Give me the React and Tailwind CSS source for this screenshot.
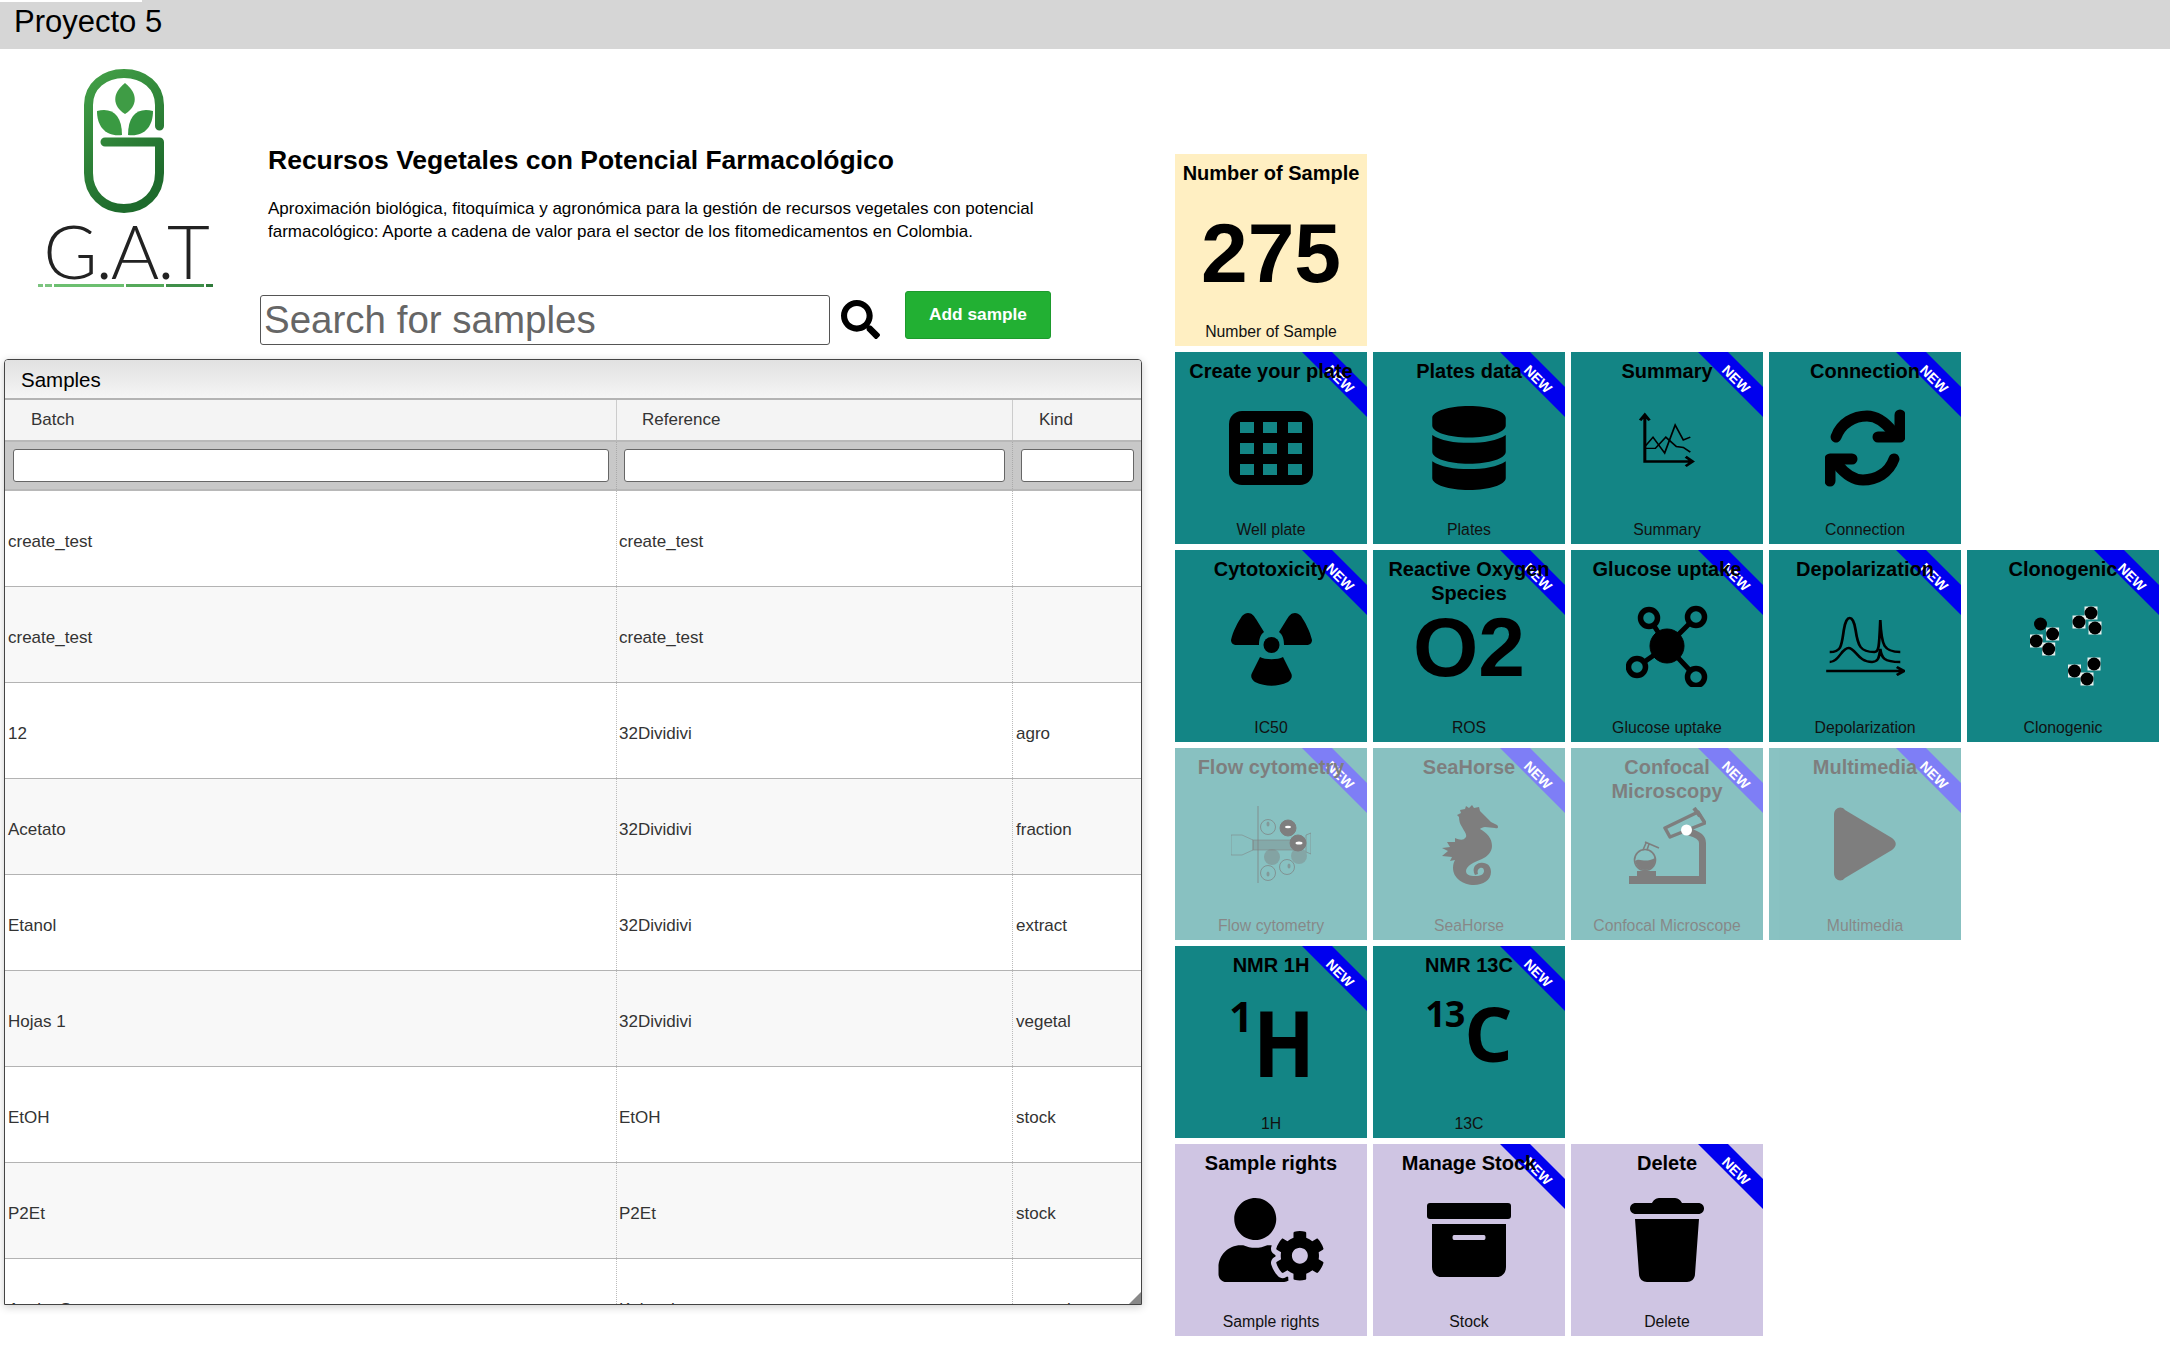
import React from "react";
import { FaDatabase, FaSearch, FaUserCog } from "react-icons/fa";

const font = "font-['Liberation_Sans',Arial,sans-serif]";

const Ribbon = () => (
  <div className="absolute top-0 right-0 w-[65px] h-[65px] overflow-hidden">
    <svg width="65" height="65" viewBox="0 0 65 65">
      <polygon points="0,0 30,0 65,35 65,65" fill="#0000ee" />
    </svg>
    <span className="absolute left-[19px] top-[18px] w-[38px] text-center text-white text-[14px] leading-[18px] font-bold rotate-45">
      NEW
    </span>
  </div>
);

const Card = ({ title, label, bg, ribbon = true, faded, children }) => (
  <div
    className={`relative w-[192px] h-[192px] shrink-0 flex flex-col text-center ${bg} ${
      faded ? "opacity-50" : ""
    }`}
  >
    {ribbon && <Ribbon />}
    <div className="relative h-[46px] shrink-0 pt-[7px] text-[20px] leading-[24px] font-bold text-black">
      {title}
    </div>
    <div className="flex-1 flex items-center justify-center min-h-0">
      {children}
    </div>
    <div className="h-[46px] shrink-0 pt-[20px] text-[15.8px] leading-[24px] text-[#111]">
      {label}
    </div>
  </div>
);

const PlateIcon = () => (
  <svg width="84" height="74" viewBox="0 0 84 74">
    <rect width="84" height="74" rx="13" fill="#000" />
    {[11, 32, 53].map((y) =>
      [11, 34, 59].map((x) => (
        <rect key={`${x}-${y}`} x={x} y={y} width="14" height="11" fill="#138585" />
      ))
    )}
  </svg>
);

const SummaryIcon = () => (
  <svg className="-translate-y-[8px]" width="56" height="56" viewBox="0 0 48 60" preserveAspectRatio="none" fill="none" stroke="#000">
    <path d="M5 3 V53 H44 M1 9 L5 3 L9 9 M40 48 L46 53 L40 58" strokeWidth="2.6" />
    <path d="M5 37 L12 27 L22 44 L31 14 L38 30 L44 27" strokeWidth="1.5" />
    <path d="M5 39 H14 L23 27 L32 37 L38 38 L44 43" strokeWidth="1.5" />
  </svg>
);

const SyncIcon = () => (
  <svg width="80" height="78" viewBox="0 0 80 78" fill="none" stroke="#000" strokeWidth="11" strokeLinecap="round" strokeLinejoin="round">
    <path d="M11 28 C16 14 29 7 42 7 C52 7 60 13 68 23" />
    <path d="M75 6 V28 H53" />
    <path d="M69 50 C64 64 51 71 38 71 C28 71 20 65 12 55" />
    <path d="M5 72 V50 H27" />
  </svg>
);

const RadiationIcon = () => (
  <svg className="translate-y-[3px]" width="81" height="73" viewBox="0 0 81 73" fill="#000">
    <path d="M17 0 C21 0 23 3 25 6 L33 19 C29 22 28 27 28 32 L6 32 C2 32 0 30 0 27 C2 18 7 9 11 3 C13 1 15 0 17 0 Z" />
    <path d="M64 0 C60 0 58 3 56 6 L48 19 C52 22 53 27 53 32 L75 32 C79 32 81 30 81 27 C79 18 74 9 70 3 C68 1 66 0 64 0 Z" />
    <path d="M29 44 C34 47 47 47 52 44 L60 60 C62 64 60 67 57 69 C46 74 35 74 24 69 C21 67 19 64 21 60 Z" />
    <circle cx="40.5" cy="32" r="8" />
  </svg>
);

const O2Icon = () => (
  <span className="text-[84px] leading-none font-bold text-black translate-y-[1px]">O2</span>
);

const GlucoseIcon = () => (
  <svg width="82" height="82" viewBox="0 0 82 82" fill="none" stroke="#000">
    <path d="M41 41 L23 13 M41 41 L70 12 M41 41 L11 62 M41 41 L70 72" strokeWidth="5" />
    <circle cx="41" cy="41" r="17" fill="#000" />
    <circle cx="23" cy="13" r="8.5" fill="#138585" strokeWidth="5.5" />
    <circle cx="70" cy="12" r="8.5" fill="#138585" strokeWidth="5.5" />
    <circle cx="11" cy="62" r="8.5" fill="#138585" strokeWidth="5.5" />
    <circle cx="70" cy="72" r="8.5" fill="#138585" strokeWidth="5.5" />
  </svg>
);

const DepolIcon = () => (
  <svg width="80" height="60" viewBox="0 0 68 60" preserveAspectRatio="none" fill="none" stroke="#000" strokeWidth="2.3">
    <path d="M4 36 C14 36 14 30 16 14 C18 -2 24 -2 26 14 C28 30 30 36 42 36 C46 36 46 30 47 4 C48 30 50 36 64 36" />
    <path d="M4 46 C12 46 14 32 20 32 C26 32 28 46 40 46 C45 46 46 42 47 33 C48 42 50 46 64 46" />
    <path d="M1 55 H66 M61 51 L67 55 L61 59" strokeWidth="2.6" />
  </svg>
);

const clonoDots = [
  [10.5, 18, false], [22.6, 28, true], [6.2, 35, true], [18.7, 43, true],
  [61, 7, true], [49, 16, true], [65, 22, true],
  [64, 58, true], [44.5, 65, true], [57, 73, true],
];

const ClonogenicIcon = () => (
  <svg className="translate-x-[3px]" width="72" height="80" viewBox="0 0 72 80">
    {clonoDots.map(([x, y, box]) => (
      <g key={`${x}-${y}`}>
        {box && <rect x={x - 6.5} y={y - 6.5} width="13" height="13" fill="#e8f0ee" />}
        <circle cx={x} cy={y} r="6.5" fill="#000" />
      </g>
    ))}
  </svg>
);

const FlowIcon = () => (
  <svg width="80" height="77" viewBox="0 0 80 77" fill="none" stroke="#000">
    <path d="M27 0 V77" strokeWidth="1.5" strokeOpacity="0.5" />
    <path d="M0 29 H11 L22 34 V44 L11 49 H0 Z" strokeWidth="1" strokeOpacity="0.5" />
    <rect x="22" y="34" width="46" height="10" fill="#000" fillOpacity="0.35" strokeWidth="1" strokeOpacity="0.5" />
    <path d="M75 29 L80 27 L80 48 L75 46 Z" strokeWidth="1" strokeOpacity="0.6" />
    <circle cx="37" cy="21" r="7.5" strokeWidth="0.7" />
    <ellipse cx="37" cy="18" rx="1.5" ry="2.5" fill="#000" fillOpacity="0.6" stroke="none" />
    <circle cx="41" cy="51" r="8" fill="#000" fillOpacity="0.45" stroke="none" />
    <circle cx="68" cy="50" r="8" fill="#000" fillOpacity="0.4" stroke="none" />
    <circle cx="57" cy="22" r="8" fill="#000" />
    <ellipse cx="57" cy="21" rx="3" ry="1.3" fill="#fff" stroke="none" />
    <circle cx="67" cy="37" r="8" fill="#000" />
    <ellipse cx="68" cy="37" rx="3.5" ry="1.6" fill="#fff" stroke="none" />
    <circle cx="37" cy="67" r="7.5" strokeWidth="0.7" />
    <ellipse cx="37" cy="68" rx="1.5" ry="2.5" fill="#000" fillOpacity="0.6" stroke="none" />
    <circle cx="56" cy="61" r="7.5" strokeWidth="0.7" />
    <ellipse cx="58" cy="60" rx="1.5" ry="2.5" fill="#000" fillOpacity="0.6" stroke="none" />
  </svg>
);

const SeahorseIcon = () => (
  <svg width="57" height="81" viewBox="0 0 57 81">
    <path
      fill="#000"
      d="M31 1 L33 4 L38 3 L39 7 L44 12 L50 18 L56 21 C58 23 57 25 54 24 L44 23 C42 23 40 24 39 25 C46 29 51 34 51 42 C51 48 46 53 41 55 C33 58 25 62 25 67 C25 71 29 72 34 72 C40 72 43 70 43 67 C43 64 41 63 39 64 C37 65 36 67 37 70 L34 71 C31 66 33 60 39 59 C46 58 50 62 50 68 C50 76 42 81 33 81 C22 81 12 74 12 64 C12 60 13 58 14 56 L9 57 L11 53 L1 52 L7 47 L1 44 L9 43 L6 38 L14 38 L14 34 C19 36 22 37 25 33 C26 30 23 27 21 23 C19 20 18 17 18 13 L16 11 L20 9 L19 6 L24 5 L25 2 L28 4 Z"
    />
  </svg>
);

const MicroscopeIcon = () => (
  <svg className="translate-y-[1px]" width="77" height="77" viewBox="0 0 77 77" fill="none" stroke="#000">
    <rect x="0" y="69" width="77" height="8" fill="#000" stroke="none" />
    <path d="M73.5 70 V36 C73.5 31 68 27 60 25" strokeWidth="7" />
    <path d="M36 21 L69 5 L76 16 L41 30 Z" strokeWidth="3.5" strokeLinejoin="round" />
    <path d="M65 1 L71 9" strokeWidth="4" />
    <circle cx="57.5" cy="23" r="5.5" fill="#fff" stroke="none" />
    <rect x="8" y="64" width="19" height="5" fill="#000" stroke="none" />
    <circle cx="16" cy="53" r="10.5" strokeWidth="1.6" />
    <path d="M6 54 C11 50 15 57 26 51 C27 59 21 63 16 63 C11 63 7 59 6 54 Z" fill="#000" stroke="none" />
    <path d="M14 43 L17 36 M16 35 L30 41 M20 37 L18 43" strokeWidth="1.6" />
  </svg>
);

const PlayIcon = () => (
  <svg width="62" height="74" viewBox="0 0 62 74">
    <path
      fill="#000"
      d="M0 8 C0 1 7 -2 11 3 L58 31 C63 35 63 39 58 43 L11 71 C7 76 0 73 0 66 Z"
    />
  </svg>
);

const BoxIcon = () => (
  <svg width="84" height="74" viewBox="0 0 84 74">
    <rect width="84" height="16" y="0" rx="3" fill="#000" />
    <path
      fill="#000"
      fillRule="evenodd"
      d="M5 21 H79 V64 C79 70 75 74 70 74 H14 C9 74 5 70 5 64 Z M27 32 C25 32 25 37 27 37 H57 C59 37 59 32 57 32 Z"
    />
  </svg>
);

const TrashIcon = () => (
  <svg width="74" height="84" viewBox="0 0 74 84">
    <path
      fill="#000"
      d="M22 5 C24 1 27 0 30 0 H44 C47 0 50 1 52 5 H68 C76 5 76 16 68 16 H6 C-2 16 -2 5 6 5 Z"
    />
    <path fill="#000" d="M5 21 H69 L65 76 C65 81 61 84 57 84 H17 C13 84 9 81 9 76 Z" />
  </svg>
);

const Logo = () => (
  <div className="w-[176px] flex flex-col items-center">
    <svg className="mr-[6px]" width="80" height="144" viewBox="0 0 80 144">
      <defs>
        <linearGradient id="pill" x1="0" y1="0" x2="0.4" y2="1">
          <stop offset="0" stopColor="#43a047" />
          <stop offset="1" stopColor="#1e6b2c" />
        </linearGradient>
      </defs>
      <path
        d="M75.5 57 V36 C75.5 17 60 4.5 40 4.5 C20 4.5 4.5 17 4.5 36 V104 C4.5 125 20 139.5 40 139.5 C60 139.5 75.5 125 75.5 104 V73 H21"
        fill="none"
        stroke="url(#pill)"
        strokeWidth="9"
        strokeLinecap="round"
        strokeLinejoin="round"
      />
      <path d="M41 14 C54 24 54 37 41 45 C28 37 28 24 41 14 Z" fill="#3f9c45" />
      <path d="M13 42 C28 38 38 46 38 66 C22 68 13 58 13 42 Z" fill="#3a9a42" />
      <path d="M69 42 C54 38 44 46 44 66 C60 68 69 58 69 42 Z" fill="#349440" />
    </svg>
    <div className="font-['Lato',sans-serif] font-light text-[74px] leading-[64px] text-[#222] mt-[6px] tracking-[-2px] mr-[3px]">
      G.A.T
    </div>
    <div className="flex gap-[2px] mt-[1px] mr-[3px]">
      <span className="w-[5px] h-[3px] bg-[#7cc47f]" />
      <span className="w-[7px] h-[3px] bg-[#7cc47f]" />
      <span className="w-[70px] h-[3px] bg-[#6cbf70]" />
      <span className="w-[38px] h-[3px] bg-[#55a95a]" />
      <span className="w-[38px] h-[3px] bg-[#3f8f49]" />
      <span className="w-[7px] h-[3px] bg-[#2f7a3a]" />
    </div>
  </div>
);

const rows = [
  ["create_test", "create_test", ""],
  ["create_test", "create_test", ""],
  ["12", "32Dividivi", "agro"],
  ["Acetato", "32Dividivi", "fraction"],
  ["Etanol", "32Dividivi", "extract"],
  ["Hojas 1", "32Dividivi", "vegetal"],
  ["EtOH", "EtOH", "stock"],
  ["P2Et", "P2Et", "stock"],
  ["Aceite S", "Kalanchoe", "vegetal"],
];

const SamplesTable = () => (
  <div className="relative mt-[14px] ml-[4px] w-[1138px] h-[946px] border border-[#444] rounded-t-[4px] shadow-[0_2px_8px_rgba(0,0,0,0.2)] overflow-hidden text-[#333] text-[17px]">
    <div className="h-[40px] border-b-2 border-[#b3b3b3] bg-gradient-to-b from-[#e1e1e1] to-[#f5f5f5] pl-[16px] pt-[8px] text-[20.5px] leading-[24px] text-black">
      Samples
    </div>
    <div className="flex h-[40px] bg-[#f4f4f4] leading-[40px]">
      <div className="w-[612px] pl-[26px] border-r border-[#ccc]">Batch</div>
      <div className="w-[396px] pl-[25px] border-r border-[#ccc]">Reference</div>
      <div className="flex-1 pl-[26px]">Kind</div>
    </div>
    <div className="flex h-[51px] bg-[#c8c8c8] border-y-2 border-[#b8b8b8] items-center">
      <div className="w-[612px] pl-[8px] pr-[7px] h-full flex items-center border-r border-dotted border-[#aaa]">
        <input className="w-full h-[33px] bg-white border border-[#666] rounded-[3px]" />
      </div>
      <div className="w-[396px] pl-[7px] pr-[7px] h-full flex items-center border-r border-dotted border-[#aaa]">
        <input className="w-full h-[33px] bg-white border border-[#666] rounded-[3px]" />
      </div>
      <div className="flex-1 pl-[8px] pr-[7px] h-full flex items-center">
        <input className="w-full h-[33px] bg-white border border-[#666] rounded-[3px]" />
      </div>
    </div>
    {rows.map((r, i) => (
      <div
        key={i}
        className={`flex h-[96px] border-b border-[#b3b3b3] ${
          i % 2 === 1 ? "bg-[#f8f8f8]" : "bg-white"
        }`}
      >
        <div className="w-[612px] pl-[3px] pt-[6px] flex items-center border-r border-dotted border-[#bbb]">{r[0]}</div>
        <div className="w-[396px] pl-[2px] pt-[6px] flex items-center border-r border-dotted border-[#bbb]">{r[1]}</div>
        <div className="flex-1 pl-[3px] pt-[6px] flex items-center">{r[2]}</div>
      </div>
    ))}
    <svg className="absolute right-0 bottom-0" width="12" height="12" viewBox="0 0 12 12">
      <polygon points="12,0 12,12 0,12" fill="#888" />
    </svg>
  </div>
);

const teal = "bg-[#138585]";
const lilac = "bg-[#cfc5e3]";

export default function App() {
  return (
    <div className={`w-[2170px] h-[1350px] bg-white overflow-hidden ${font}`}>
      <div className="h-[49px] bg-[#d6d6d6] text-[31px] leading-[40px] text-black">
        <div className="w-[142px] h-[2px] bg-white" />
        <div className="pl-[14px]">Proyecto 5</div>
      </div>
      <div className="flex">
        <div className="w-[1175px] shrink-0">
          <div className="flex h-[200px]">
            <div className="w-[268px] shrink-0 pl-[39px] pt-[20px]">
              <Logo />
            </div>
            <div className="pt-[93px]">
              <h1 className="text-[26.5px] leading-[36px] font-bold text-black">
                Recursos Vegetales con Potencial Farmacológico
              </h1>
              <p className="mt-[19px] w-[820px] text-[17px] leading-[23px] text-black">
                Aproximación biológica, fitoquímica y agronómica para la gestión de recursos vegetales con potencial
                <br />
                farmacológico: Aporte a cadena de valor para el sector de los fitomedicamentos en Colombia.
              </p>
            </div>
          </div>
          <div className="flex items-start pl-[260px] mt-[42px]">
            <input
              placeholder="Search for samples"
              className="w-[570px] h-[50px] mt-[4px] border border-[#555] rounded-[3px] pl-[3px] text-[38.5px] placeholder:text-[#666]"
            />
            <FaSearch className="ml-[11px] mt-[9px] text-black" size={39} />
            <button className="ml-[25px] w-[146px] h-[48px] bg-[#22b033] border border-[#1d9a2d] rounded-[3px] text-white text-[17.3px] font-bold">
              Add sample
            </button>
          </div>
          <SamplesTable />
        </div>
        <div className="pt-[105px] flex flex-col gap-[6px]">
          <div className="flex gap-[6px]">
            <Card title="Number of Sample" label="Number of Sample" bg="bg-[#ffefc2]" ribbon={false}>
              <span className="text-[84px] leading-none font-bold text-black translate-y-[3px]">275</span>
            </Card>
          </div>
          <div className="flex gap-[6px]">
            <Card title="Create your plate" label="Well plate" bg={teal}><PlateIcon /></Card>
            <Card title="Plates data" label="Plates" bg={teal}><FaDatabase className="w-[74px] h-[84px] text-black" /></Card>
            <Card title="Summary" label="Summary" bg={teal}><SummaryIcon /></Card>
            <Card title="Connection" label="Connection" bg={teal}><SyncIcon /></Card>
          </div>
          <div className="flex gap-[6px]">
            <Card title="Cytotoxicity" label="IC50" bg={teal}><RadiationIcon /></Card>
            <Card title={<>Reactive Oxygen<br />Species</>} label="ROS" bg={teal}><O2Icon /></Card>
            <Card title="Glucose uptake" label="Glucose uptake" bg={teal}><GlucoseIcon /></Card>
            <Card title="Depolarization" label="Depolarization" bg={teal}><DepolIcon /></Card>
            <Card title="Clonogenic" label="Clonogenic" bg={teal}><ClonogenicIcon /></Card>
          </div>
          <div className="flex gap-[6px]">
            <Card title="Flow cytometry" label="Flow cytometry" bg={teal} faded><FlowIcon /></Card>
            <Card title="SeaHorse" label="SeaHorse" bg={teal} faded><SeahorseIcon /></Card>
            <Card title={<>Confocal<br />Microscopy</>} label="Confocal Microscope" bg={teal} faded><MicroscopeIcon /></Card>
            <Card title="Multimedia" label="Multimedia" bg={teal} faded><PlayIcon /></Card>
          </div>
          <div className="flex gap-[6px]">
            <Card title="NMR 1H" label="1H" bg={teal}>
              <div className="flex items-start font-['Open_Sans',sans-serif] font-bold text-black translate-x-[-2px] translate-y-[1px]">
                <span className="text-[42px] leading-[46px]">1</span>
                <span className="text-[92px] leading-[104px] mt-[-3px] scale-x-[0.88] origin-left w-[56px]">H</span>
              </div>
            </Card>
            <Card title="NMR 13C" label="13C" bg={teal}>
              <div className="flex items-start font-['Open_Sans',sans-serif] font-bold text-black translate-y-[-8px]">
                <span className="text-[36px] leading-[40px] tracking-[-1px]">13</span>
                <span className="text-[76px] leading-[84px] mt-[-3px]">C</span>
              </div>
            </Card>
          </div>
          <div className="flex gap-[6px]">
            <Card title="Sample rights" label="Sample rights" bg={lilac} ribbon={false}><FaUserCog className="w-[106px] h-[84px] text-black" /></Card>
            <Card title="Manage Stock" label="Stock" bg={lilac}><BoxIcon /></Card>
            <Card title="Delete" label="Delete" bg={lilac}><TrashIcon /></Card>
          </div>
        </div>
      </div>
    </div>
  );
}
